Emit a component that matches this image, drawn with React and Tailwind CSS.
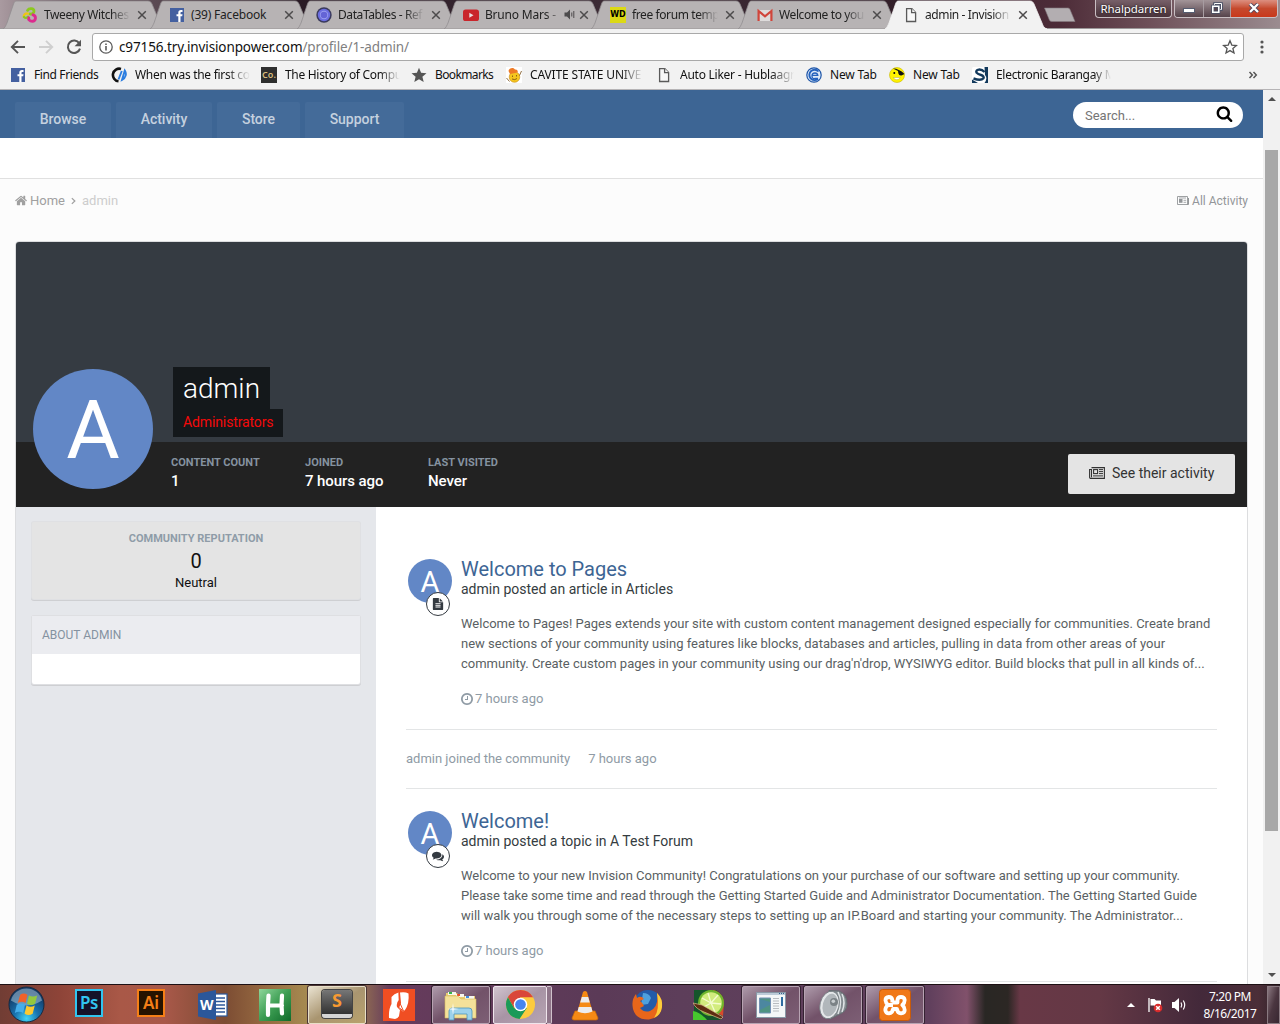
import React from "react";

const CHROME = "font-['Noto_Sans','Open_Sans',sans-serif]";

/* ---------- glyphs ---------- */

const HOME =
  "M1408 992v480q0 26-19 45t-45 19h-384v-384h-256v384h-384q-26 0-45-19t-19-45v-480q0-1 .5-3t.5-3l575-474 575 474q1 2 1 6zm223-69l-62 74q-8 9-21 11h-3q-13 0-21-7l-692-577-692 577q-12 8-24 7-13-2-21-11l-62-74q-8-10-7-23.5t11-21.5l719-599q32-26 76-26t76 26l244 204v-195q0-14 9-23t23-9h192q14 0 23 9t9 23v408l219 182q10 8 11 21.5t-7 23.5z";
const SEARCH =
  "M1216 832q0-185-131.5-316.5t-316.5-131.5-316.5 131.5-131.5 316.5 131.5 316.5 316.5 131.5 316.5-131.5 131.5-316.5zm512 832q0 52-38 90t-90 38q-54 0-90-38l-343-342q-179 124-399 124-143 0-273.5-55.5t-225-150-150-225-55.5-273.5 55.5-273.5 150-225 225-150 273.5-55.5 273.5 55.5 225 150 150 225 55.5 273.5q0 220-124 399l343 343q37 37 37 90z";
const CLOCK =
  "M1024 544v448q0 14-9 23t-23 9h-320q-14 0-23-9t-9-23v-64q0-14 9-23t23-9h224v-352q0-14 9-23t23-9h64q14 0 23 9t9 23zm416 352q0-148-73-273t-198-198-273-73-273 73-198 198-73 273 73 273 198 198 273 73 273-73 198-198 73-273zm224 0q0 209-103 385.5t-279.5 279.5-385.5 103-385.5-103-279.5-279.5-103-385.5 103-385.5 279.5-279.5 385.5-103 385.5 103 279.5 279.5 103 385.5z";
const FILE_TEXT =
  "M1596 476q14 14 28 36h-472v-472q22 14 36 28zm-476 164h544v1056q0 40-28 68t-68 28h-1344q-40 0-68-28t-28-68v-1600q0-40 28-68t68-28h800v544q0 40 28 68t68 28zm160 736v-64q0-14-9-23t-23-9h-704q-14 0-23 9t-9 23v64q0 14 9 23t23 9h704q14 0 23-9t9-23zm0-256v-64q0-14-9-23t-23-9h-704q-14 0-23 9t-9 23v64q0 14 9 23t23 9h704q14 0 23-9t9-23zm0-256v-64q0-14-9-23t-23-9h-704q-14 0-23 9t-9 23v64q0 14 9 23t23 9h704q14 0 23-9t9-23z";
const COMMENTS =
  "M1408 768q0 139-94 257t-256.500 186.500-353.500 68.500q-86 0-176-16-124 88-278 128-36 9-86 16h-3q-11 0-20.500-8t-11.500-21q-1-3-1-6.500t.5-6.500 2-6l2.500-5 3.500-5.500 4-5 4.500-5 4-4.500q5-6 23-25t26-29.500 22.500-29 25-38.500 20.500-44q-124-72-195-177t-71-224q0-139 94-257t256.500-186.500 353.500-68.500 353.500 68.500 256.500 186.500 94 257zm384 256q0 120-71 224.500t-195 176.500q10 24 20.500 44t25 38.500 22.500 29 26 29.500 23 25q1 1 4 4.500t4.500 5 4 5 3.500 5.500l2.500 5 2 6 .5 6.500-1 6.500q-3 14-13 22t-22 7q-50-7-86-16-154-40-278-128-90 16-176 16-271 0-472-132 58 4 88 4 161 0 309-45t264-129q125-92 192-212t67-254q0-77-23-152 129 71 204 178t75 230z";

function Glyph({ d, className }) {
  return (
    <svg viewBox="0 0 1792 1792" className={className} fill="currentColor">
      <path d={d} />
    </svg>
  );
}

function Newspaper({ className }) {
  return (
    <svg viewBox="0 0 16 12" className={className} fill="none" stroke="currentColor">
      <path d="M2.5 .6H15.4V11.4H1.8A1.2 1.2 0 0 1 .6 10.2V2.5H2.5V10.2" strokeWidth="1.1" />
      <rect x="4.6" y="2.6" width="4" height="4" strokeWidth="1.1" />
      <path d="M10 2.6h4M10 4.6h4M10 6.6h4M4 8.9h10" strokeWidth="1" />
    </svg>
  );
}

function NewspaperSmall({ className }) {
  return (
    <svg viewBox="0 0 12 9" className={className} fill="none" stroke="currentColor">
      <path d="M.5 .5H10.500V8.500H.5z" strokeWidth=".9" />
      <path d="M11.500 2V8.500H10" strokeWidth="1" />
      <path d="M2 3h3.500v3.800H2z" fill="currentColor" stroke="none" />
      <path d="M2 2h7M6.500 4.300h2.700M6.500 6.300h2.700" strokeWidth=".8" />
    </svg>
  );
}

function PageIcon() {
  return (
    <svg viewBox="0 0 16 16" className="size-4" fill="#f8f8f8" stroke="#5a5a5a" strokeWidth="1.3">
      <path d="M3.6 1.6h5.2l3.8 3.8v9.1h-9z" />
      <path d="M8.6 1.6v4h4" />
    </svg>
  );
}

function FbIcon() {
  return (
    <svg viewBox="0 0 16 16" className="size-4">
      <rect x="1" y="1" width="14" height="14" fill="#4460a0" />
      <path d="M9.3 15V9.3H7.5V7.2h1.8V5.6c0-1.7 1-2.7 2.7-2.7h1.5v2h-1c-.8 0-1 .3-1 1v1.3h2l-.3 2.1h-1.7V15z" fill="#fff" />
    </svg>
  );
}

function TweenyIcon() {
  return (
    <svg viewBox="0 0 16 16" className="size-4" fill="none" strokeLinecap="round">
      <path d="M5.500 3.400C7 1 12 1 12 4.300 12 6.500 10 7.200 8 7" stroke="#8cc81e" strokeWidth="2.800" />
      <path d="M6 6.600C3.500 6 1.500 7.500 1.800 9.800" stroke="#efc514" strokeWidth="2.400" />
      <path d="M2 10c1.300 1.400 3 1 4-.4" stroke="#8cc81e" strokeWidth="2.200" />
      <path d="M11 7.800c3.500 1 3.200 6.400-.7 6.400-2.800 0-4-1.700-3.500-3.400" stroke="#dc2c8e" strokeWidth="2.900" />
    </svg>
  );
}

function DataTablesIcon() {
  return (
    <svg viewBox="0 0 16 16" className="size-4">
      <circle cx="8" cy="8" r="7.7" fill="#3a3a5c" />
      <circle cx="8" cy="8" r="6.2" fill="#6b6de0" />
      <circle cx="8" cy="8" r="4.2" fill="#9a9df0" />
      <circle cx="8" cy="8" r="3.3" fill="#6464d6" />
    </svg>
  );
}

function YoutubeIcon() {
  return (
    <svg viewBox="0 0 16 16" className="size-4">
      <rect y="2.4" width="16" height="11.6" rx="2.6" fill="#c9252b" />
      <path d="M6.3 5.8v5l4.2-2.5z" fill="#e8e0e0" />
    </svg>
  );
}

function GmailIcon() {
  return (
    <svg viewBox="0 0 16 16" className="size-4">
      <rect x="1" y="3" width="14" height="11" fill="#dedbdb" />
      <path d="M1.6 14V4l6.4 5.4L14.4 4v10" fill="none" stroke="#d0453b" strokeWidth="2.2" />
    </svg>
  );
}

/* ---------- browser window ---------- */

const TABS = [
  { icon: <TweenyIcon />, title: "Tweeny Witches" },
  { icon: <FbIcon />, title: "(39) Facebook" },
  { icon: <DataTablesIcon />, title: "DataTables - Ref" },
  { icon: <YoutubeIcon />, title: "Bruno Mars -", sound: true },
  {
    icon: (
      <span className="flex size-4 items-center justify-center bg-[#dcd914] text-[8px] font-bold text-black font-['DejaVu_Sans',sans-serif]">
        WD
      </span>
    ),
    title: "free forum temp",
  },
  { icon: <GmailIcon />, title: "Welcome to you" },
  { icon: <PageIcon />, title: "admin - Invision", active: true },
];

function Tab({ tab }) {
  return (
    <div className={tab.active ? "relative z-10 h-[29px] w-[147px] shrink-0" : "relative h-[29px] w-[147px] shrink-0"}>
      <svg className="absolute -left-[10px] top-0 h-[29px] w-[163px]" viewBox="0 0 163 29">
        <path
          d="M0 29C2 28 3 25 4 23L10.500 4C11.500 1.500 12 1 14 1H145C147 1 148 2 149 4L157 23C158 26 159 28 162 29Z"
          fill={tab.active ? "#f2f2f2" : "#b7b3b4"}
          stroke={tab.active ? "#f2f2f2" : "#928e90"}
          strokeWidth=".8"
        />
      </svg>
      <div className={tab.active ? "relative flex h-[29px] items-center pl-[8px]" : "relative flex h-[29px] items-center pl-[9px]"}>
        {tab.icon}
        <span
          className={
            tab.sound
              ? "ml-[6px] w-[74px] whitespace-nowrap text-[12px] tracking-[-0.2px] text-[#222] [mask-image:linear-gradient(to_right,#000_82%,#0004)]"
              : tab.title.length > 13
                ? "ml-[6px] w-[86px] whitespace-nowrap text-[12px] tracking-[-0.4px] text-[#222] [mask-image:linear-gradient(to_right,#000_78%,transparent)]"
                : "ml-[6px] w-[86px] whitespace-nowrap text-[12px] tracking-[-0.2px] text-[#222]"
          }
        >
          {tab.title}
        </span>
        {tab.sound && (
          <svg viewBox="0 0 11 11" className="ml-[5px] size-[11px]">
            <path d="M.5 3.500H3L6 .5v10L3 7.500H.5z" fill="#4d4b4c" />
            <path d="M7.800 3.500v4M9.800 2v7" fill="none" stroke="#4d4b4c" />
          </svg>
        )}
        <svg viewBox="0 0 10 10" className={tab.sound ? "ml-[4px] size-[10px]" : "ml-[7px] size-[10px]"} stroke="#4d4b4c" strokeWidth="1.5">
          <path d="M1.200 1.200l7.600 7.600M8.800 1.200l-7.600 7.600" />
        </svg>
      </div>
    </div>
  );
}

function WindowButtons() {
  return (
    <div className="absolute right-[2px] top-0 flex items-start">
      <div className="mr-[2px] flex h-[18px] w-[77px] items-center justify-center rounded-b-[4px] border border-t-0 border-[#c9bfc3] bg-gradient-to-b from-[#776069] to-[#49323a] text-[11.500px] tracking-[-0.100px] text-white [text-shadow:0_0_2px_#000]">
        Rhalpdarren
      </div>
      <div className="flex h-[18px] overflow-hidden rounded-b-[4px] border border-t-0 border-[#c9bfc3]">
        <span className="flex w-[29px] items-center justify-center border-r border-[#a79ca1] bg-gradient-to-b from-[#a39599] to-[#56434b]">
          <span className="mt-[3px] h-[5px] w-[12px] border border-[#555c70] bg-white" />
        </span>
        <span className="flex w-[27px] items-center justify-center border-r border-[#a79ca1] bg-gradient-to-b from-[#a39599] to-[#56434b]">
          <svg viewBox="0 0 12 12" className="mb-[2px] size-3" fill="none">
            <path d="M3.500 1.500h7v6h-7z" stroke="#474f66" strokeWidth="2.600" />
            <path d="M3.500 1.500h7v6h-7z" stroke="#fff" />
            <path d="M1.800 4.300h6v6h-6z" fill="#56434b" stroke="#474f66" strokeWidth="3" />
            <path d="M1.800 4.300h6v6h-6z" stroke="#fff" strokeWidth="1.600" />
          </svg>
        </span>
        <span className="flex w-[46px] items-center justify-center bg-gradient-to-b from-[#dc8f80] via-[#c5492d] to-[#c9381a]">
          <svg viewBox="0 0 12 10" className="mb-[2px] h-[10px] w-[12px]">
            <path d="M2 1l8 8M10 1l-8 8" stroke="#53445a" strokeWidth="4" />
            <path d="M2 1l8 8M10 1l-8 8" stroke="#fff" strokeWidth="2.300" />
          </svg>
        </span>
      </div>
    </div>
  );
}

function TabStrip() {
  return (
    <div className="relative flex h-[29px] border-b border-[#9b9899] bg-[linear-gradient(to_right,#a99aa0_0,#7a6870_60px,#2a1b25_300px,#3d2c36_620px,#33202a_900px,#4d2c38_1060px,#6e5059_1150px,#9b8c90_1280px)] pl-[13px]">
      {TABS.map((t) => (
        <Tab key={t.title} tab={t} />
      ))}
      <svg viewBox="0 0 34 16" className="ml-[1px] mt-[7px] h-[16px] w-[34px]">
        <path d="M1.500 1H25q1.500 0 2 1.500l5 12H9q-2 0-2.600-1.500z" fill="#b3aeb1" stroke="#857a80" strokeWidth=".6" />
      </svg>
      <WindowButtons />
    </div>
  );
}

function Toolbar() {
  return (
    <div className="flex h-[33px] items-center pt-[3px]">
      <svg viewBox="0 0 16 16" className="ml-[10px] size-4" fill="none" stroke="#555" strokeWidth="1.900">
        <path d="M15 8H2.500M8 1.800L1.800 8 8 14.200" />
      </svg>
      <svg viewBox="0 0 16 16" className="ml-[12px] size-4" fill="none" stroke="#cfcfcf" strokeWidth="1.900">
        <path d="M1 8h12.500M8 1.800L14.200 8 8 14.200" />
      </svg>
      <svg viewBox="0 0 16 16" className="ml-[12px] size-4" fill="none" stroke="#555" strokeWidth="2">
        <path d="M13.300 4.400A6.200 6.200 0 1 0 14 9.600" />
        <path d="M15 .8v6.400H8.600z" fill="#555" stroke="none" />
      </svg>
      <div className="ml-[10px] flex h-[28px] w-[1152px] items-center rounded-[3px] border border-[#a9a9a9] bg-white">
        <svg viewBox="0 0 14 14" className="ml-[6px] size-[14px]" fill="none" stroke="#5a5a5a">
          <circle cx="7" cy="7" r="6.200" strokeWidth="1.300" />
          <path d="M7 6v4.500M7 3.400v1.700" strokeWidth="1.600" />
        </svg>
        <span className="ml-[6px] w-[1097px] text-[13.500px] tracking-[-0.110px] text-[#111]">
          c97156.try.invisionpower.com<span className="text-[#808080]">/profile/1-admin/</span>
        </span>
        <svg viewBox="0 0 16 16" className="ml-[6px] size-4" fill="none" stroke="#555" strokeWidth="1.300">
          <path d="M8 1.800l1.800 4.300 4.600.4-3.500 3 1.100 4.500L8 11.600 4 14l1.100-4.500-3.500-3 4.600-.4z" />
        </svg>
      </div>
      <svg viewBox="0 0 4 14" className="ml-[16px] h-[14px] w-[4px]" fill="#555">
        <circle cx="2" cy="2" r="1.600" />
        <circle cx="2" cy="7" r="1.600" />
        <circle cx="2" cy="12" r="1.600" />
      </svg>
    </div>
  );
}

const BOOKMARKS = [
  { w: "w-[101px]", t: "w-[70px] tracking-[-0.38px]", label: "Find Friends", icon: <FbIcon /> },
  {
    w: "w-[150px]",
    t: "w-[115px] tracking-[-0.3px] [mask-image:linear-gradient(to_right,#000_80%,transparent)]",
    label: "When was the first co",
    icon: (
      <svg viewBox="0 0 16 16" className="size-4" fill="none">
        <path d="M10 1.900A6.300 6.300 0 1 0 7.500 14.200" stroke="#111" strokeWidth="2.600" />
        <path d="M10.800 4L7.500 12.500M13.800 3.500c2 3 1.200 7.500-2.800 9.500l2.800-9.500z" stroke="#2b7de0" strokeWidth="1.900" />
      </svg>
    ),
  },
  {
    w: "w-[150px]",
    t: "w-[115px] tracking-[-0.3px] [mask-image:linear-gradient(to_right,#000_82%,transparent)]",
    label: "The History of Compu",
    icon: <span className="flex size-4 items-center justify-center bg-[#2e2e2e] text-[9px] font-semibold text-[#d8bc7c]">Co.</span>,
  },
  {
    w: "w-[95px]",
    t: "w-[64px] tracking-[-0.62px]",
    label: "Bookmarks",
    icon: (
      <svg viewBox="0 0 16 16" className="size-4" fill="#555">
        <path d="M8 .8l2.100 5 5.400.4-4.100 3.500 1.300 5.300L8 12.200 3.300 15l1.300-5.300L.5 6.200l5.400-.4z" />
      </svg>
    ),
  },
  {
    w: "w-[150px]",
    t: "w-[113px] tracking-[-0.15px] [mask-image:linear-gradient(to_right,#000_80%,transparent)]",
    label: "CAVITE STATE UNIVE",
    icon: (
      <svg viewBox="0 0 16 16" className="size-4">
        <rect width="16" height="16" fill="#fff" />
        <circle cx="8.500" cy="10" r="5.300" fill="#f5c61e" stroke="#c98a1a" strokeWidth=".6" />
        <path d="M2.500 4C3 .5 8 0 9 2.500c2-.3 3.500 1.500 2.500 3L4 7z" fill="#ee7a25" />
        <path d="M6.500 8.500v1.500M10.500 8v1.500M6 12q3 1.500 5-.5M.5 11l3 3.500M15.500 4l-2 4.500" stroke="#754a13" strokeWidth=".8" fill="none" />
      </svg>
    ),
  },
  {
    w: "w-[150px]",
    t: "w-[114px] tracking-[-0.25px] [mask-image:linear-gradient(to_right,#000_80%,transparent)]",
    label: "Auto Liker - Hublaagr",
    icon: <PageIcon />,
  },
  {
    w: "w-[83px]",
    t: "w-[52px] tracking-[-0.2px]",
    label: "New Tab",
    icon: (
      <svg viewBox="0 0 16 16" className="size-4" fill="none">
        <circle cx="8" cy="8" r="7.200" fill="#dce9f8" stroke="#1d55a8" strokeWidth="1.200" />
        <path d="M12.500 4.500A5.200 5.200 0 1 0 12 11.800" stroke="#2462bd" strokeWidth="1.900" />
        <path d="M5.500 8.400h6.300Q11.500 6 9 6 6 6 6 9t3 2.500h3" stroke="#2462bd" strokeWidth="1.300" />
      </svg>
    ),
  },
  {
    w: "w-[83px]",
    t: "w-[52px] tracking-[-0.2px]",
    label: "New Tab",
    icon: (
      <svg viewBox="0 0 16 16" className="size-4">
        <circle cx="8" cy="8" r="7.500" fill="#fff200" stroke="#c8b800" strokeWidth=".6" />
        <path d="M4 1.500Q10 1.500 15.500 7L13 8.200Q10 9 9.300 6.200L9 4z" fill="#111" />
        <path d="M4.500 5h1.600v2H4.500z" fill="#111" />
        <path d="M4 10.500h7.500q-3.500 4.500-7.500 0z" fill="#fff" stroke="#b9ad3a" strokeWidth=".5" />
      </svg>
    ),
  },
  {
    w: "w-[140px]",
    t: "w-[115px] tracking-[-0.3px] [mask-image:linear-gradient(to_right,#000_85%,transparent)]",
    label: "Electronic Barangay M",
    icon: (
      <svg viewBox="0 0 16 16" className="size-4">
        <rect width="16" height="16" rx="1.500" fill="#fff" />
        <path d="M12.500 5Q10 2.300 6.800 2.600 3.500 3.200 4.500 5.600 5.500 7 9 8q3.500 1.200 2.500 3.200-2.500 3-10 .3" fill="none" stroke="#12395c" strokeWidth="2.400" />
        <path d="M12.500 0H16v16h-3.500q3.500-5 .5-8zM0 12.500l6 3.500H0z" fill="#12395c" />
      </svg>
    ),
  },
];

function BookmarksBar() {
  return (
    <div className="flex h-[28px] items-center border-b border-[#b6b4b6] pb-[2px] pl-[10px]">
      {BOOKMARKS.map((b, i) => (
        <div key={i} className={"flex shrink-0 items-center " + b.w}>
          {b.icon}
          <span className={"ml-[8px] whitespace-nowrap text-[12px] text-[#111] " + b.t}>{b.label}</span>
        </div>
      ))}
      <svg viewBox="0 0 10 8" className="ml-[136px] h-[8px] w-[10px]" fill="none" stroke="#555" strokeWidth="1.500">
        <path d="M1.500 1L4.300 4 1.500 7M5.500 1L8.300 4 5.500 7" />
      </svg>
    </div>
  );
}

/* ---------- page ---------- */

function Avatar({ big }) {
  return (
    <span
      className={
        big
          ? "flex size-[120px] items-center justify-center rounded-full bg-[#6287c6] pt-[2px] text-[82px] leading-none text-white"
          : "flex size-[44px] items-center justify-center rounded-full bg-[#6287c6] pt-[2px] text-[29px] leading-none text-white"
      }
    >
      A
    </span>
  );
}

const NAV = [
  ["Browse", "w-[96px]"],
  ["Activity", "w-[96px]"],
  ["Store", "w-[83px]"],
  ["Support", "w-[99px]"],
];

function Header() {
  return (
    <header className="flex h-[48px] items-start justify-between bg-[#3d6594] pl-[15px] pr-5 pt-3">
      <nav className="flex gap-[5px] text-[14px] font-medium tracking-[-0.030px] text-[#c5d1df]">
        {NAV.map(([n, w]) => (
          <a key={n} className={"flex h-[36px] items-center justify-center rounded-t-[2px] bg-[#446b99] pb-[2px] " + w}>
            {n}
          </a>
        ))}
      </nav>
      <div className="flex h-[26px] w-[170px] items-center justify-between rounded-full bg-white pl-3 pr-[10px] text-[13px] text-[#757575]">
        <span className="pt-[1px]">Search...</span>
        <Glyph d={SEARCH} className="mb-[3px] size-[17px] text-black" />
      </div>
    </header>
  );
}

function Stat({ label, value, className }) {
  return (
    <div className={className}>
      <div className="text-[11px] font-bold leading-[18px] text-[#8592a0]">{label}</div>
      <div className="-mt-px text-[15px] font-medium leading-[20px] tracking-[-0.080px] text-white">{value}</div>
    </div>
  );
}

function Cover() {
  return (
    <div className="relative">
      <div className="h-[200px] rounded-t-[3px] bg-[#353b42] pl-[157px] pt-[125px]">
        <div className="flex h-[42px] w-[97px] items-center justify-center bg-[#14181b] pt-[2px] text-[28px] font-light text-white">admin</div>
        <div className="flex h-[28px] w-[110px] items-center bg-[#14181b] pb-[2px] pl-[10px] text-[14px] tracking-[-0.120px] text-[#f50909]">Administrators</div>
      </div>
      <div className="flex h-[65px] items-start bg-[#222] pl-[155px] pr-3 pt-[12px]">
        <Stat label="CONTENT COUNT" value="1" className="w-[134px]" />
        <Stat label="JOINED" value="7 hours ago" className="w-[123px]" />
        <Stat label="LAST VISITED" value="Never" className="w-[120px]" />
        <button className="ml-auto flex h-[40px] w-[167px] items-center rounded-[2px] bg-[#e4e4e4] pb-[2px] pl-[21px] text-[14px] text-[#333]">
          <Newspaper className="h-[12px] w-[16px]" />
          <span className="ml-[7px]">See their activity</span>
        </button>
      </div>
      <div className="absolute left-[17px] top-[127px]">
        <Avatar big />
      </div>
    </div>
  );
}

function Sidebar() {
  return (
    <aside className="w-[360px] shrink-0 bg-[#e5e7eb] px-[16px] pt-[15px]">
      <section className="flex h-[77px] flex-col items-center rounded-[2px] bg-[#e4e4e4] pt-[8px] shadow-[0_0_0_1px_#dfe0e3,0_1px_0_1px_#cecfd2]">
        <div className="text-[11px] font-bold leading-[18px] text-[#8f9ca8]">COMMUNITY REPUTATION</div>
        <div className="text-[20px] leading-[26px] text-[#111]">0</div>
        <div className="text-[13px] leading-[18px] text-[#111]">Neutral</div>
      </section>
      <section className="mt-[17px] h-[68px] rounded-[2px] bg-white shadow-[0_0_0_1px_#dedfe2,0_1px_0_1px_#cecfd2]">
        <h3 className="flex h-[38px] items-center bg-[#ebecf0] pl-[10px] text-[12px] text-[#8492a0]">ABOUT ADMIN</h3>
      </section>
    </aside>
  );
}

function Post({ title, sub, lines, badge, className }) {
  return (
    <article className={"flex border-b border-[#e3e5e6] " + className}>
      <div className="relative ml-[2px] size-[44px] shrink-0">
        <Avatar />
        <span className="absolute left-[18px] top-[33px] flex size-[24px] items-center justify-center rounded-full border border-[#343a41] bg-white text-[#343a41]">
          {badge}
        </span>
      </div>
      <div className="ml-[9px]">
        <h2 className="text-[20px] leading-[20px] text-[#3d6594]">{title}</h2>
        <p className="text-[14px] leading-[20px] text-[#353c41]">{sub}</p>
        <div className="mt-[15px] whitespace-nowrap text-[13px] leading-[20px] text-[#5a5f63]">
          {lines.map((l) => (
            <p key={l}>{l}</p>
          ))}
        </div>
        <p className="mt-[15px] flex h-5 items-center text-[13px] text-[#8f9ba5]">
          <Glyph d={CLOCK} className="-ml-[1px] mb-px mr-[1px] size-[14px]" />
          7 hours ago
        </p>
      </div>
    </article>
  );
}

function Feed() {
  return (
    <main className="w-[841px] pl-[30px] pt-[52px]">
      <Post
        className="h-[171px]"
        title="Welcome to Pages"
        sub="admin posted an article in Articles"
        badge={<Glyph d={FILE_TEXT} className="size-[12px]" />}
        lines={[
          "Welcome to Pages! Pages extends your site with custom content management designed especially for communities. Create brand",
          "new sections of your community using features like blocks, databases and articles, pulling in data from other areas of your",
          "community. Create custom pages in your community using our drag'n'drop, WYSIWYG editor. Build blocks that pull in all kinds of...",
        ]}
      />
      <div className="flex h-[59px] items-center gap-[18px] border-b border-[#e3e5e6] text-[13px] text-[#8f9ba5]">
        <span>admin joined the community</span>
        <span>7 hours ago</span>
      </div>
      <Post
        className="mt-[22px] h-[171px]"
        title="Welcome!"
        sub="admin posted a topic in A Test Forum"
        badge={<Glyph d={COMMENTS} className="size-[12px]" />}
        lines={[
          "Welcome to your new Invision Community! Congratulations on your purchase of our software and setting up your community.",
          "Please take some time and read through the Getting Started Guide and Administrator Documentation. The Getting Started Guide",
          "will walk you through some of the necessary steps to setting up an IP.Board and starting your community. The Administrator...",
        ]}
      />
    </main>
  );
}

function Scrollbar() {
  return (
    <div className="flex w-[17px] shrink-0 flex-col items-center bg-[#f1f1f1]">
      <svg viewBox="0 0 8 4" className="mt-[7px] h-[4px] w-[8px]" fill="#505050">
        <path d="M4 0l4 4H0z" />
      </svg>
      <div className="mt-[49px] h-[681px] w-[13px] bg-[#a8a8a8]" />
      <svg viewBox="0 0 8 4" className="mb-[7px] mt-auto h-[4px] w-[8px]" fill="#505050">
        <path d="M4 4l4-4H0z" />
      </svg>
    </div>
  );
}

/* ---------- taskbar ---------- */

const APPS = [
  {
    node: (
      <span className="mb-[3px] flex size-7 items-center justify-center border-2 border-[#31c5f0] bg-[#15132a] text-[17px] font-semibold tracking-[-0.500px] text-[#31c5f0]">Ps</span>
    ),
  },
  {
    node: (
      <span className="mb-[3px] flex size-7 items-center justify-center border-2 border-[#f57f17] bg-[#261300] text-[17px] font-semibold text-[#f57f17]">Ai</span>
    ),
  },
  {
    node: (
      <span className="relative flex h-[30px] w-[30px] items-center">
        <svg viewBox="0 0 30 30" className="absolute inset-0">
          <rect x="15" y="4" width="14" height="22" fill="#fff" stroke="#2b579a" strokeWidth="1.200" />
          <path d="M18 8h9M18 11.500h9M18 15h9M18 18.500h9M18 22h9" stroke="#2b579a" strokeWidth="1.600" />
          <path d="M0 3.500L18 0v30L0 26.500z" fill="#2b579a" />
        </svg>
        <span className="relative ml-[2px] text-[14px] font-bold text-white">W</span>
      </span>
    ),
  },
  {
    node: (
      <svg viewBox="0 0 32 32" className="size-8">
        <defs>
          <linearGradient id="green" x1="0" y1="0" x2="1" y2="1">
            <stop stopColor="#8fd79b" />
            <stop offset=".5" stopColor="#3c9d52" />
            <stop offset="1" stopColor="#0f6b2a" />
          </linearGradient>
        </defs>
        <rect width="32" height="32" fill="url(#green)" />
        <path d="M9.500 6.500L9 16v10M23 6.500L22.500 16 23 24.500M9 16.500h14" fill="none" stroke="#fff" strokeWidth="4.200" strokeLinecap="round" />
      </svg>
    ),
  },
  {
    open: "light",
    node: (
      <span className="mb-[2px] flex h-[28px] w-[30px] items-start justify-center rounded-[3px] border-b-[4px] border-[#d5d5d5] bg-gradient-to-b from-[#777] to-[#333] text-[18px] font-bold leading-[20px] text-[#f79a32] shadow-[0_0_0_1px_#444]">
        S
      </span>
    ),
  },
  {
    node: (
      <svg viewBox="0 0 32 32" className="size-8">
        <rect width="32" height="32" fill="#f04e23" />
        <path d="M8.500 8Q11 4.500 15.500 3.500L16 11q-3 2.500-2 7l3 3-1 6q-1.500 3-4 3l-6-1q-.5-9 2.500-14z" fill="#fff" />
        <path d="M17 3.500q5-1 8.500 1 1 10-3.500 16.500l-2 1.500-4-3.500 2-5z" fill="#fff" />
        <path d="M16.200 3.500v9l4.300 9.500-6-4.500" fill="none" stroke="#f04e23" strokeWidth="1" />
      </svg>
    ),
  },
  {
    open: "mid",
    node: (
      <svg viewBox="0 0 34 32" className="h-8 w-[34px]">
        <path d="M2 4h11l2 3h16v20H2z" fill="#e9cd70" />
        <path d="M4 3h8v3H4zM12 5h8v3h-8zM21 7h9v3h-9z" fill="#f6f6ee" />
        <path d="M5 3h3v2H5z" fill="#35b34a" />
        <path d="M13 5h3v2h-3z" fill="#e8502e" />
        <path d="M22 7h3v2h-3z" fill="#3d8de0" />
        <path d="M1 7h13l3 3h15v19H1z" fill="#f4e19a" stroke="#d6ba5d" strokeWidth=".6" />
        <path d="M5 31V22q0-3 3-3h17q3 0 3 3v9h-5v-6H10v6z" fill="#9cd2ec" stroke="#4b94bd" strokeWidth=".8" />
        <path d="M9 14l.8 5.200 5.200.8-5.200.8L9 26l-.8-5.200L3 20l5.200-.8z" fill="#fff" opacity=".85" />
      </svg>
    ),
  },
  { open: "chrome" },
  {
    node: (
      <svg viewBox="0 0 28 32" className="h-8 w-7">
        <path d="M4 22h20l3 7q0 2-2 2H3q-2 0-2-2z" fill="#f58a14" stroke="#c96a05" strokeWidth=".7" />
        <path d="M12 3q2-2 4 0l6 21q-8 5-16 0z" fill="#f58a14" />
        <path d="M10.800 8h6.400l1.600 5.500H9.200zM7.700 18h12.600l1.200 4.500q-7.500 3.500-15 0z" fill="#ececec" />
      </svg>
    ),
  },
  {
    node: (
      <svg viewBox="0 0 32 32" className="size-8">
        <circle cx="17" cy="15" r="14" fill="#235ba8" />
        <path d="M12 4q6 0 8 5l-3 6-7 1z" fill="#4ea1dd" />
        <path d="M26 4q6 6 5 14-2 11-13 12.500Q5 31 2 20 0 11 5 5l1 4q4-3 7 1l-4 2q3 2 4 5l-4 2q4 5 10 3 9-4 7-18z" fill="#e8661a" />
        <path d="M26 4q6 6 5 14-1 8-8 11 6-8 3-25z" fill="#fccd3a" />
      </svg>
    ),
  },
  {
    node: (
      <svg viewBox="0 0 32 32" className="size-8">
        <path d="M1 1h22q8 4 8 14l-3 16H1z" fill="#15552b" />
        <path d="M20 1a13 13 0 0 1 11 13l-1 13-8-4z" fill="#d84a2c" />
        <circle cx="18" cy="14" r="13" fill="#6eb52e" />
        <circle cx="18" cy="14" r="10.800" fill="#d2ec7e" />
        <path d="M18 14L9 9M18 14l-3-10M18 14l7-8M18 14l10 1M18 14l-9 5M18 14l4 9" stroke="#f4fbd0" strokeWidth="1.300" />
        <path d="M0 14l9 2 21 12-2 2-17-7Q3 20 0 14z" fill="#5d2d12" stroke="#dbb98c" strokeWidth=".7" />
        <path d="M0 22q7 1 14 9H0z" fill="#46c82e" />
      </svg>
    ),
  },
  {
    open: "mid",
    node: (
      <svg viewBox="0 0 30 26" className="h-[26px] w-[30px]">
        <rect x=".5" y=".5" width="29" height="25" fill="#f4f7f8" stroke="#8897a5" />
        <path d="M1 1h28v2H1z" fill="#bccbd8" />
        <path d="M23 1.500h1M25 1.500h1M27 1.500h1" stroke="#31618e" />
        <path d="M3.500 6h11v15h-11z" fill="#4f9382" stroke="#7391b5" />
        <path d="M4 7l10 3v3L4 18z" fill="#4b7fb4" opacity=".6" />
        <path d="M17 6.500h6M17 9h6M17 11.500h6M17 14h6M17 16.500h6M17 19h6" stroke="#b8bcc0" />
        <path d="M25 5h2v9h-2z" fill="#2e6ca2" />
      </svg>
    ),
  },
  {
    open: "mid",
    node: (
      <svg viewBox="0 0 32 32" className="size-8">
        <path d="M12 1.500l10 .5q8 3 8 13 0 8-9 11l-8 4z" fill="#848b90" stroke="#656d72" />
        <path d="M21 3q5 9 0 22M25 5q4 8 0 18" fill="none" stroke="#dfe4e6" strokeWidth="1.500" />
        <ellipse cx="12.500" cy="16" rx="9.500" ry="14" transform="rotate(14 12.500 16)" fill="#e4e7e9" stroke="#737b80" strokeWidth=".8" />
        <ellipse cx="13" cy="16" rx="7.200" ry="11.500" transform="rotate(14 13 16)" fill="#b1b7bb" />
        <circle cx="17" cy="13" r="4" fill="#7b8286" />
        <circle cx="16.300" cy="12.300" r="1.800" fill="#c8cdd0" />
      </svg>
    ),
  },
  {
    open: "mid",
    node: (
      <svg viewBox="0 0 32 32" className="size-8">
        <rect x=".5" y=".5" width="31" height="31" rx="3" fill="#f07818" stroke="#c85a08" />
        <path
          d="M13.300 13.500V11Q13 8 9.800 8 6.500 8.200 6.500 11.300 6.700 14 9.200 16 6.300 18 6.300 21 6.700 24.300 10 24.300 13.500 24 14 20H18Q18.500 24.300 22 24.300 25.700 24 25.700 21 25.700 18 23.300 16 25.700 14 25.700 11 25.200 8 22 8 18.700 8 18.500 11V13.500H13.300M10 16H14"
          fill="none"
          stroke="#fff"
          strokeWidth="3.800"
          strokeLinejoin="round"
        />
      </svg>
    ),
  },
];

function ChromeLogo() {
  return (
    <svg viewBox="0 0 32 32" className="size-[31px]">
      <circle cx="16" cy="16" r="15" fill="#fccb3e" />
      <path d="M3 8.500A15 15 0 0 1 29 8.500H16L9.500 19.800z" fill="#d9473a" />
      <path d="M3 8.500A15 15 0 0 0 15 31l7.500-11.500L9.500 19.800z" fill="#1b9a58" />
      <circle cx="16" cy="16" r="7" fill="#fff" />
      <circle cx="16" cy="16" r="5.500" fill="#4685f0" />
    </svg>
  );
}

function TaskCell({ app }) {
  if (app.open === "chrome") {
    return (
      <div className="flex w-[62px] shrink-0 pl-[1px]">
        <span className="flex h-[38px] w-[54px] items-center justify-center rounded-[2px] border border-[#efe5ec] bg-gradient-to-br from-[#d1c4ce] via-[#a894a5] to-[#b7a5b3]">
          <ChromeLogo />
        </span>
        <span className="h-[38px] w-[5px] rounded-r-[2px] border border-l-0 border-[#d0c2cc] bg-[#8f7589]" />
      </div>
    );
  }
  const frame =
    app.open === "light"
      ? "border border-[#e8dfc8] bg-gradient-to-br from-[#e9e2d0] via-[#a99570] to-[#b9a26c] shadow-[0_0_0_1px_#4b3636]"
      : app.open
        ? "border border-[#b7a3b2] bg-gradient-to-br from-[#ad9aaa] via-[#725269] to-[#7d5f75] shadow-[0_0_0_1px_#352232]"
        : "";
  return (
    <div className="flex w-[62px] shrink-0 justify-center">
      <span className={"flex h-[38px] w-[58px] items-center justify-center rounded-[2px] " + frame}>{app.node}</span>
    </div>
  );
}

function StartOrb() {
  return (
    <svg viewBox="0 0 38 38" className="size-[37px]">
      <defs>
        <radialGradient id="orb" cx=".5" cy=".9" r=".75">
          <stop stopColor="#41d4f5" />
          <stop offset=".45" stopColor="#1a74b0" />
          <stop offset="1" stopColor="#123a66" />
        </radialGradient>
      </defs>
      <circle cx="19" cy="19" r="18" fill="url(#orb)" stroke="#16293f" />
      <path d="M3 15a16.500 16.500 0 0 1 32 0q-8 5-16 5t-16-5z" fill="#b5cfe0" opacity=".5" />
      <path d="M12.500 9q3.500-2.500 7.500 0l-2 8.500q-4-2.500-8 0z" fill="#f0612a" />
      <path d="M21.500 9.800q4 2.200 8.500 0l-2.200 8.500q-4 2.500-8.300 0z" fill="#94c83d" />
      <path d="M9 19.300q4.500-2.500 8.500 0l-2 8.500q-4-2.500-8.500 0z" fill="#45aeea" />
      <path d="M19 20q4 2.500 8.500 0l-2.200 8.500q-4 2.500-8.300 0z" fill="#fdc92f" />
    </svg>
  );
}

function Taskbar() {
  return (
    <div className={"flex h-[40px] items-center border-t border-[#1d1014] bg-[linear-gradient(to_right,#713d34_0,#8e4438_60px,#a95847_120px,#a85849_165px,#7c4c33_225px,#93663f_260px,#a58950_305px,#8b6653_366px,#663b5c_390px,#5b3a57_600px,#5d3e5a_680px,#61405d_930px,#81516b_967px,#292724_985px,#2c2724_1008px,#683846_1020px,#643845_1100px,#43293a_1200px,#4b2e38_1258px,#31232a_1280px)] " + CHROME}>
      <div className="flex w-[58px] shrink-0 justify-start pl-[8px]">
        <StartOrb />
      </div>
      {APPS.map((a, i) => (
        <TaskCell key={i} app={a} />
      ))}
      <svg viewBox="0 0 8 4" className="ml-auto h-[4px] w-[8px] shrink-0" fill="#fff">
        <path d="M4 0l4 4H0z" />
      </svg>
      <svg viewBox="0 0 16 16" className="ml-[12px] size-4 shrink-0">
        <path d="M2 1v14" stroke="#fff" strokeWidth="1.300" />
        <path d="M3.500 2h4l1.500 1.500h5V10H8.500L7 8.500H3.500z" fill="#fff" />
        <circle cx="11" cy="11" r="4.300" fill="#d92b2b" />
        <path d="M9.200 9.200l3.600 3.600M12.800 9.200l-3.600 3.600" stroke="#fff" strokeWidth="1.500" />
      </svg>
      <svg viewBox="0 0 16 16" className="ml-[8px] size-4 shrink-0" fill="none" stroke="#fff">
        <path d="M1 5h2.500L8 1v14L3.500 11H1z" fill="#fff" stroke="none" />
        <path d="M10 5.500q1.500 2.500 0 5M12.300 3.500q2.800 4.500 0 9" strokeWidth="1.200" />
      </svg>
      <div className="ml-[13px] w-[60px] text-center text-[12px] leading-[17px] tracking-[-0.450px] text-white">
        <div>7:20 PM</div>
        <div>8/16/2017</div>
      </div>
      <div className="ml-[7px] h-[38px] w-[13px] shrink-0 border border-[#8a7a81] bg-gradient-to-br from-[#8a7880] via-[#4b3640] to-[#382731]" />
    </div>
  );
}

export default function App() {
  return (
    <div className="flex h-[1024px] w-[1280px] flex-col overflow-hidden">
      <div className={"h-[90px] shrink-0 bg-[#f2f2f2] " + CHROME}>
        <TabStrip />
        <Toolbar />
        <BookmarksBar />
      </div>
      <div className="flex h-[894px] shrink-0 overflow-hidden font-[Roboto,sans-serif]">
        <div className="h-[894px] w-[1263px] shrink-0 overflow-hidden bg-[#fcfcfc]">
          <Header />
          <div className="h-[41px] border-b border-[#e0e0e0] bg-white" />
          <div className="flex h-[62px] items-start justify-between px-[15px] pt-[12px] text-[13px] leading-5 text-[#a0a0a0]">
            <div className="flex items-center">
              <Glyph d={HOME} className="mb-[2px] mr-[2px] size-[13px]" />
              Home
              <svg viewBox="0 0 6 8" className="mx-[6px] h-[8px] w-[5px]" fill="none" stroke="currentColor" strokeWidth="1.500">
                <path d="M1 .6L4.600 4 1 7.400" />
              </svg>
              <span className="text-[#cdcdcd]">admin</span>
            </div>
            <div className="flex items-center text-[12px] text-[#939699]">
              <NewspaperSmall className="mb-[2px] mr-[3px] h-[9px] w-[12px]" />
              All Activity
            </div>
          </div>
          <div className="mx-[15px] h-[800px] rounded-t-[4px] border border-[#dcdddf] bg-white">
            <Cover />
            <div className="flex h-[560px]">
              <Sidebar />
              <Feed />
            </div>
          </div>
        </div>
        <Scrollbar />
      </div>
      <Taskbar />
    </div>
  );
}
